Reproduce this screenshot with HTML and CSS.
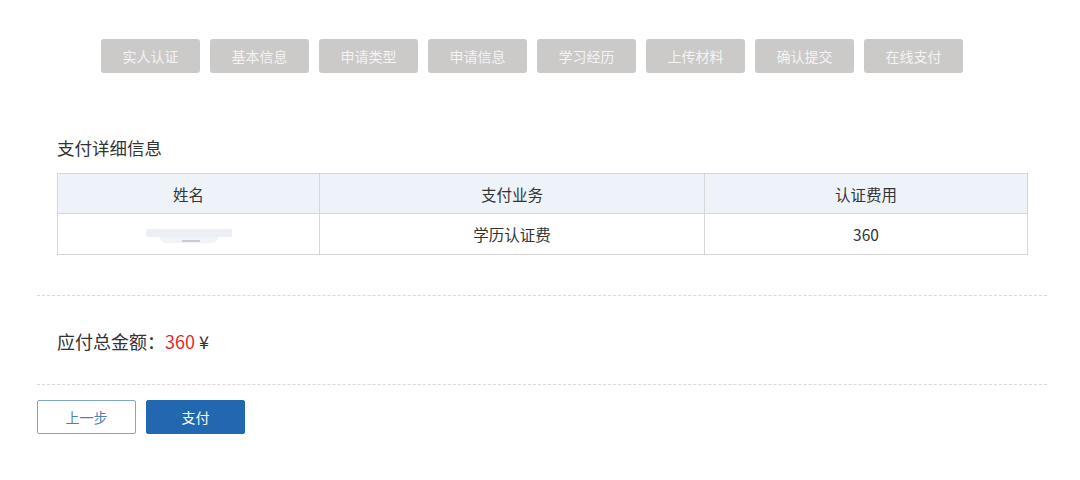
FILE: index.html
```html
<!DOCTYPE html>
<html lang="zh-CN">
<head>
<meta charset="utf-8">
<title>在线支付</title>
<link rel="stylesheet" href="styles.css">
</head>
<body>
<div class="page">
  <div class="steps">
    <div class="step">实人认证</div>
    <div class="step">基本信息</div>
    <div class="step">申请类型</div>
    <div class="step">申请信息</div>
    <div class="step">学习经历</div>
    <div class="step">上传材料</div>
    <div class="step">确认提交</div>
    <div class="step">在线支付</div>
  </div>
  <div class="section">
    <div class="title">支付详细信息</div>
    <table class="tbl">
      <thead>
        <tr><th class="c1">姓名</th><th class="c2">支付业务</th><th class="c3">认证费用</th></tr>
      </thead>
      <tbody>
        <tr><td><span class="blur"><span class="blur-top"></span><span class="blur-bot"></span></span></td><td>学历认证费</td><td>360</td></tr>
      </tbody>
    </table>
  </div>
  <div class="divider"></div>
  <div class="total">应付总金额：<span class="amount">360</span> ¥</div>
  <div class="divider"></div>
  <div class="actions">
    <button class="btn btn-prev">上一步</button>
    <button class="btn btn-pay">支付</button>
  </div>
</div>
</body>
</html>
```

FILE: styles.css
```css
* { box-sizing: border-box; }
body {
  margin: 0;
  background: #fff;
  font-family: "Noto Sans CJK SC", "Noto Sans", sans-serif;
  color: #333;
}
.page {
  width: 1010px;
  margin-left: 37px;
  padding-top: 39px;
}
.steps {
  display: flex;
  gap: 10px;
  padding-left: 64px;
}
.step {
  width: 99px;
  height: 34px;
  background: #ccc9c9;
  color: #f4f4f4;
  border-radius: 3px;
  font-size: 14px;
  line-height: 34px;
  text-align: center;
}
.section {
  padding: 0 20px;
  margin-top: 63px;
}
.title {
  font-size: 17.5px;
  line-height: 24px;
  color: #333;
  margin-bottom: 13px;
}
.tbl {
  width: 971px;
  border-collapse: collapse;
  font-size: 15.5px;
  color: #333;
}
.tbl th, .tbl td {
  border: 1px solid #d6d6d6;
  text-align: center;
  font-weight: normal;
  padding: 0;
}
.tbl th { height: 40px; }
.tbl td { height: 41px; }
.tbl thead tr { background: #eef3fa; }
.c1 { width: 262px; }
.c2 { width: 385px; }
.blur {
  display: inline-block;
  position: relative;
  width: 86px;
  height: 18px;
  vertical-align: middle;
}
.blur-top {
  position: absolute;
  left: 0; top: 2px;
  width: 86px; height: 8px;
  background: #eceff3;
  border-radius: 2px;
}
.blur-bot {
  position: absolute;
  left: 14px; top: 10px;
  width: 58px; height: 6px;
  background: #f1f3f6;
  border-radius: 0 0 6px 6px;
}
.blur-bot::after {
  content: "";
  position: absolute;
  left: 22px; top: 3px;
  width: 18px; height: 2px;
  background: #c9ccd0;
}
.divider {
  border-top: 1px dashed #d9d9d9;
  height: 0;
}
.section + .divider { margin-top: 40px; }
.total {
  padding-left: 20px;
  height: 88px;
  line-height: 90px;
  font-size: 18px;
  color: #333;
}
.amount { color: #e5262a; }
.actions {
  display: flex;
  gap: 10px;
  margin-top: 15px;
}
.btn {
  width: 99px;
  height: 34px;
  border-radius: 2px;
  font-family: "Noto Sans CJK SC", "Noto Sans", sans-serif;
  font-size: 14px;
  cursor: pointer;
}
.btn-prev {
  background: #fff;
  border: 1px solid #7fa6cf;
  color: #4d7fb5;
}
.btn-pay {
  background: #2168b0;
  border: 1px solid #2168b0;
  color: #fff;
}
```
